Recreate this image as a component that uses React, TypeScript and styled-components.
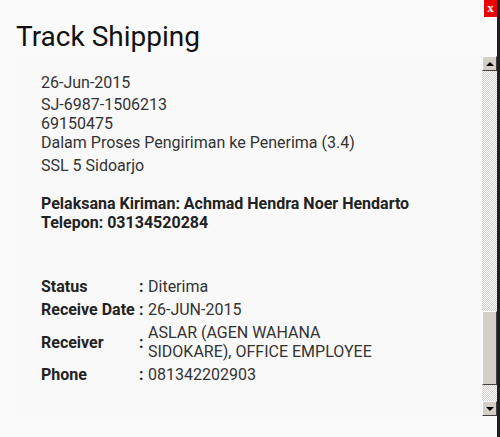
import React from 'react';
import styled, { createGlobalStyle } from 'styled-components';

const GlobalStyle = createGlobalStyle`
  html, body {
    margin: 0;
    padding: 0;
    background: #fafafa;
  }
  body {
    font-family: Roboto, "Liberation Sans", Arial, sans-serif;
  }
`;

const Window = styled.div`
  width: 500px;
  height: 437px;
  box-sizing: border-box;
  background: #fafafa;
  border-right: 3px solid #1e1e1e;
  display: flex;
  flex-direction: column;
`;

const Header = styled.div`
  height: 56px;
  display: flex;
  justify-content: space-between;
  align-items: flex-start;
`;

const Title = styled.h1`
  margin: 0;
  padding: 19px 0 0 16px;
  font-size: 28px;
  line-height: 36px;
  font-weight: 400;
  color: #111;
`;

const CloseButton = styled.div`
  width: 13px;
  height: 17px;
  background: #ee0000;
  color: #fff;
  font-family: "Liberation Serif", "Times New Roman", serif;
  font-weight: 700;
  font-size: 13px;
  line-height: 16px;
  text-align: center;
`;

const Body = styled.div`
  height: 360px;
  margin-left: 16px;
  display: flex;
  background: #f9f9f9;
`;

const Content = styled.div`
  flex: 1;
  padding: 17px 0 0 25px;
  font-size: 16px;
  line-height: 19px;
  color: #333;
`;

const Line = styled.div<{ $top?: number }>`
  margin-top: ${(p) => p.$top ?? 0}px;
`;

const Strong = styled.div<{ $top?: number }>`
  margin-top: ${(p) => p.$top ?? 0}px;
  font-weight: 700;
  color: #222;
`;

const InfoTable = styled.table`
  margin-top: 43px;
  border-collapse: collapse;
  font-size: 16px;
  line-height: 19px;
  color: #333;

  td {
    padding: 2px 0;
    vertical-align: middle;
  }
`;

const Label = styled.td`
  width: 98px;
  font-weight: 700;
  color: #222;
`;

const Colon = styled.td`
  width: 9px;
  font-weight: 700;
  color: #222;
`;

const Value = styled.td`
  width: 240px;
`;

const ScrollBar = styled.div`
  width: 15px;
  display: flex;
  flex-direction: column;
  background: repeating-conic-gradient(#d4d0c8 0 25%, #ffffff 0 50%) 0 0 / 2px 2px;
`;

const ScrollButton = styled.div`
  height: 15px;
  box-sizing: border-box;
  background: #d4d0c8;
  border-top: 1px solid #ffffff;
  border-left: 1px solid #ffffff;
  border-right: 1px solid #404040;
  border-bottom: 1px solid #404040;
  display: flex;
  align-items: center;
  justify-content: center;
`;

const Arrow = styled.div<{ $down?: boolean }>`
  width: 0;
  height: 0;
  border-left: 4px solid transparent;
  border-right: 4px solid transparent;
  ${(p) => (p.$down ? 'border-top: 4px solid #000;' : 'border-bottom: 4px solid #000;')}
`;

const Track = styled.div`
  flex: 1;
  display: flex;
  flex-direction: column;
`;

const Spacer = styled.div`
  flex: 1;
`;

const Thumb = styled.div`
  height: 74px;
  margin-bottom: 16px;
  box-sizing: border-box;
  background: #d4d0c8;
  border-top: 1px solid #ffffff;
  border-left: 1px solid #ffffff;
  border-right: 1px solid #404040;
  border-bottom: 1px solid #404040;
`;

const rows = [
  { label: 'Status', value: 'Diterima' },
  { label: 'Receive Date', value: '26-JUN-2015' },
  { label: 'Receiver', value: 'ASLAR (AGEN WAHANA SIDOKARE), OFFICE EMPLOYEE' },
  { label: 'Phone', value: '081342202903' },
];

export default function App() {
  return (
    <>
      <GlobalStyle />
      <Window>
        <Header>
          <Title>Track Shipping</Title>
          <CloseButton>x</CloseButton>
        </Header>
        <Body>
          <Content>
            <Line>26-Jun-2015</Line>
            <Line $top={3}>SJ-6987-1506213</Line>
            <Line>69150475</Line>
            <Line>Dalam Proses Pengiriman ke Penerima (3.4)</Line>
            <Line $top={4}>SSL 5 Sidoarjo</Line>
            <Strong $top={19}>Pelaksana Kiriman: Achmad Hendra Noer Hendarto</Strong>
            <Strong>Telepon: 03134520284</Strong>
            <InfoTable>
              <tbody>
                {rows.map((r) => (
                  <tr key={r.label}>
                    <Label>{r.label}</Label>
                    <Colon>:</Colon>
                    <Value>{r.value}</Value>
                  </tr>
                ))}
              </tbody>
            </InfoTable>
          </Content>
          <ScrollBar>
            <ScrollButton>
              <Arrow />
            </ScrollButton>
            <Track>
              <Spacer />
              <Thumb />
            </Track>
            <ScrollButton>
              <Arrow $down />
            </ScrollButton>
          </ScrollBar>
        </Body>
      </Window>
    </>
  );
}
